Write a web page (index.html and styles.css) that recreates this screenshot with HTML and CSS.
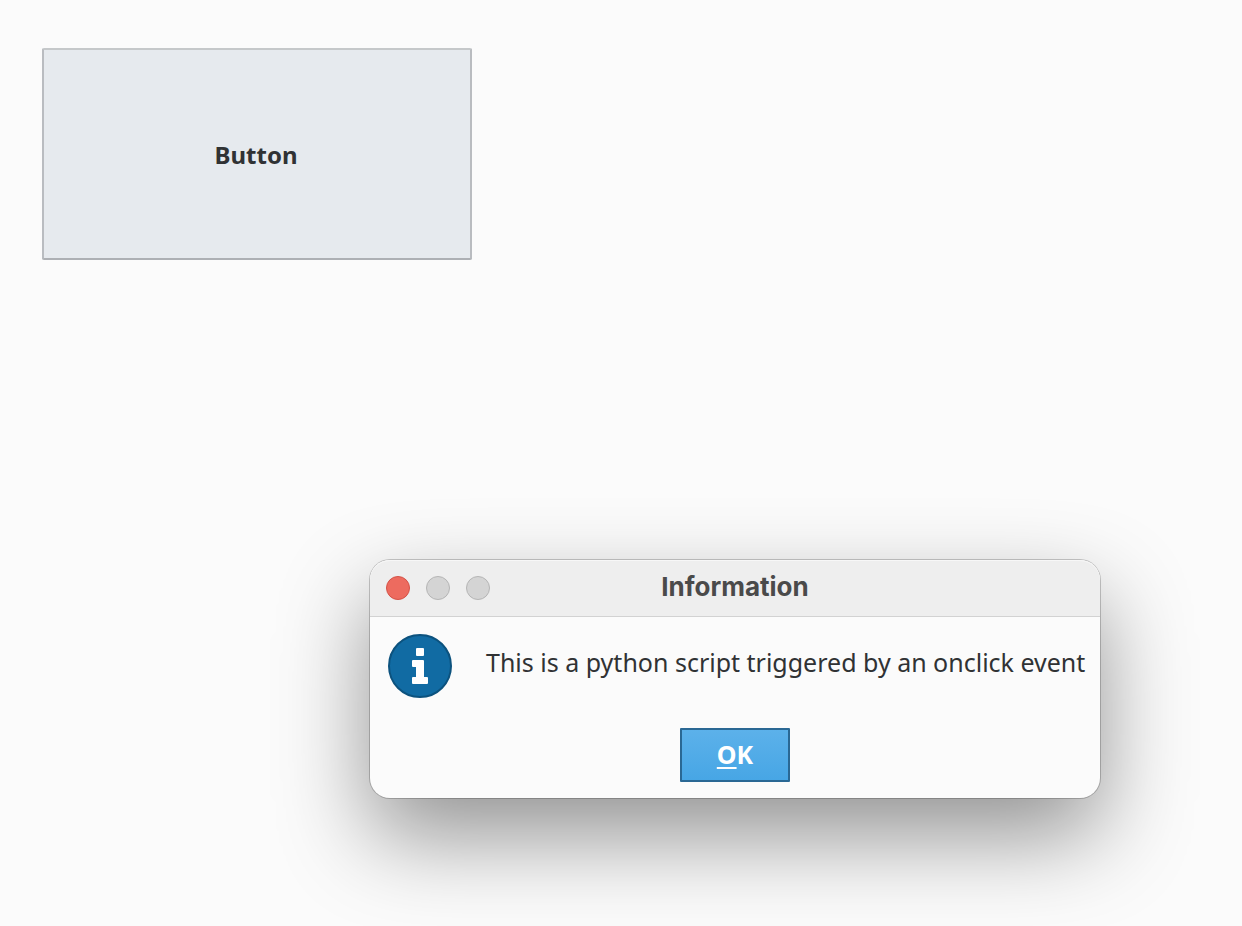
FILE: index.html
```html
<!DOCTYPE html>
<html lang="en">
<head>
  <meta charset="utf-8">
  <meta name="viewport" content="width=device-width, initial-scale=1">
  <title>Information</title>
  <link rel="stylesheet" href="styles.css">
</head>
<body>
  <main class="desktop">
    <button class="big-button" type="button">Button</button>

    <section class="dialog" role="dialog" aria-labelledby="dialog-title" aria-describedby="dialog-message">
      <header class="titlebar">
        <div class="window-controls">
          <button class="control control-close" type="button" aria-label="Close"></button>
          <button class="control" type="button" aria-label="Minimize" disabled></button>
          <button class="control" type="button" aria-label="Zoom" disabled></button>
        </div>
        <h1 class="title" id="dialog-title">Information</h1>
      </header>
      <div class="content">
        <div class="message-row">
          <svg class="info-icon" viewBox="0 0 64 64" aria-hidden="true">
            <circle cx="32" cy="32" r="31" fill="#116ba3" stroke="#0c527e" stroke-width="2"/>
            <rect x="28" y="14" width="8" height="8" rx="1" fill="#fff"/>
            <path d="M25 26H35Q36 26 36 27V43H39Q40 43 40 44V49Q40 50 39 50H25Q24 50 24 49V44Q24 43 25 43H28V33H25Q24 33 24 32V27Q24 26 25 26Z" fill="#fff"/>
          </svg>
          <p class="message" id="dialog-message">This is a python script triggered by an onclick event</p>
        </div>
        <button class="ok-button" type="button" accesskey="o"><span class="mnemonic">O</span>K</button>
      </div>
    </section>
  </main>
</body>
</html>
```
FILE: styles.css
```css
* {
  box-sizing: border-box;
}

body {
  margin: 0;
  background: #fbfbfb;
  color: #303234;
  font-family: "Noto Sans", sans-serif;
  font-size: 25px;
  line-height: 32px;
}

button {
  padding: 0;
  font: inherit;
  color: inherit;
}

.desktop {
  position: relative;
  min-height: 100vh;
  padding: 48px 42px;
  overflow: hidden;
}

.big-button {
  width: 430px;
  height: 212px;
  padding: 2px 2px 0 0;
  border: 2px solid;
  border-color: #c5c8ca #b9bcc0 #adb0b4;
  border-radius: 2px;
  background: #e6eaee;
  font-size: 24px;
  font-weight: 700;
}

.dialog {
  position: absolute;
  top: 560px;
  left: 370px;
  min-width: 730px;
  border-radius: 20px;
  background: #fbfbfb;
  box-shadow: 0 0 0 1px rgba(0, 0, 0, 0.2), 0 38px 90px rgba(0, 0, 0, 0.42);
}

.titlebar {
  display: grid;
  grid-template-columns: 1fr auto 1fr;
  align-items: center;
  height: 57px;
  padding: 0 16px;
  border-bottom: 1px solid #d2d2d2;
  border-radius: 20px 20px 0 0;
  background: #eeeeee;
  box-shadow: inset 0 1px #f7f7f7;
}

.window-controls {
  display: flex;
  gap: 16px;
}

.control {
  width: 24px;
  height: 24px;
  border: 1px solid #b5b5b5;
  border-radius: 50%;
  background: #d4d4d4;
}

.control-close {
  border-color: #d45247;
  background: #ed6b5f;
}

.title {
  margin: 0;
  padding-bottom: 2px;
  color: #4a4a4a;
  font-family: Inter, sans-serif;
  font-size: 26px;
  font-weight: 700;
}

.content {
  display: flex;
  flex-direction: column;
  align-items: center;
  gap: 30px;
  padding: 17px 0 16px;
}

.message-row {
  display: flex;
  align-self: stretch;
  gap: 34px;
  padding: 0 14px 0 18px;
}

.info-icon {
  width: 64px;
  height: 64px;
}

.message {
  margin: 12px 0 0;
  white-space: nowrap;
}

.ok-button {
  width: 110px;
  height: 54px;
  padding-bottom: 2px;
  border: 2px solid #2a6894;
  border-radius: 1px;
  background: linear-gradient(#5cb1ea, #47a6e5);
  color: #fff;
  font-weight: 700;
}

.mnemonic {
  text-decoration: underline;
  text-decoration-thickness: 2px;
  text-underline-offset: 3px;
}
```
